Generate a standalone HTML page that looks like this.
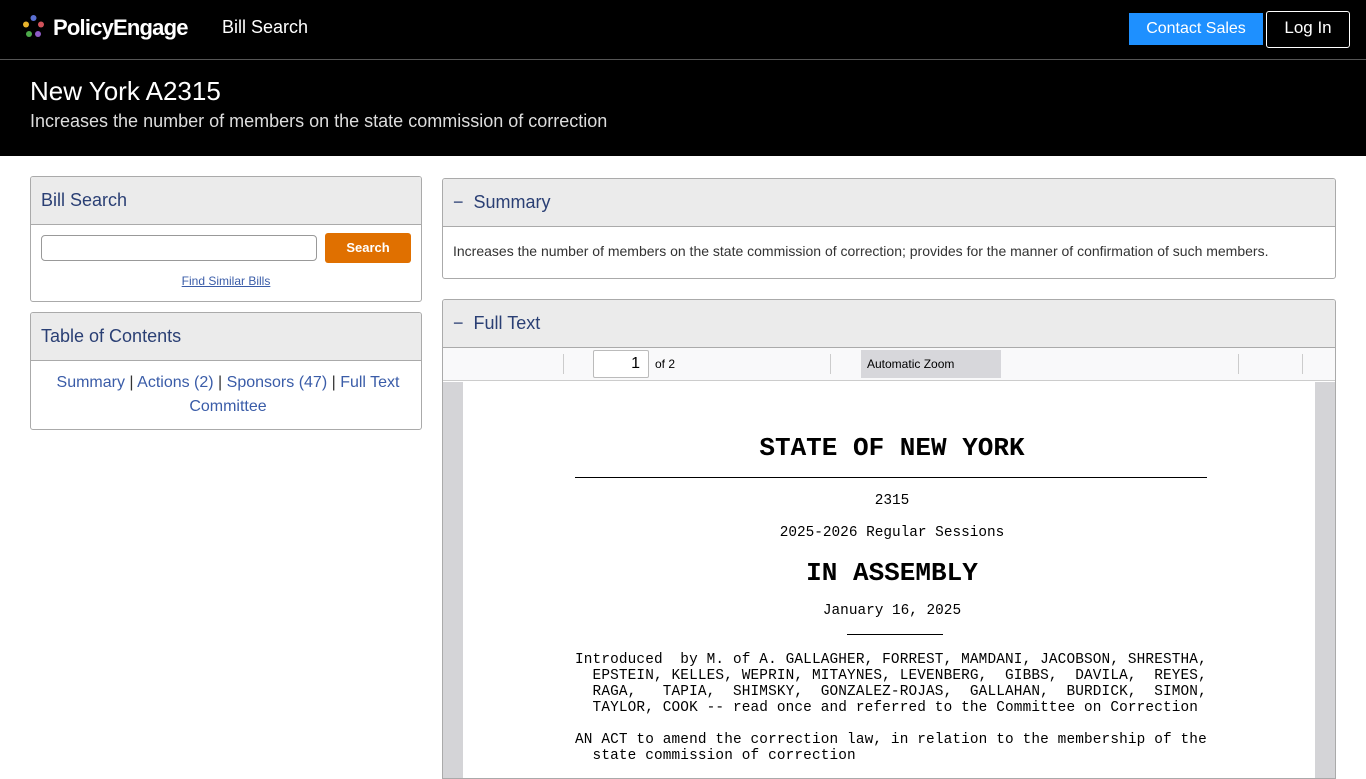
<!DOCTYPE html>
<html><head><meta charset="utf-8"><style>
*{box-sizing:border-box;margin:0;padding:0}
body{width:1366px;height:768px;overflow:hidden;background:#fff;font-family:"Liberation Sans",sans-serif;position:relative}
.abs{position:absolute}
.nav{left:0;top:0;width:1366px;height:60px;background:#000;border-bottom:1px solid #555}
.hero{left:0;top:60px;width:1366px;height:96px;background:#000;color:#fff}
.card{border:1px solid #aaa;border-radius:3px;background:#fff;overflow:hidden}
.ch{background:#ebebeb;border-bottom:1px solid #aaa;color:#2a3f74;font-size:18px;padding-left:10px}
.mono{font-family:"Liberation Mono",monospace;font-size:14.4px;line-height:16px;white-space:pre;color:#000}
a{color:#3a5ca8}
</style></head><body>
<div class="abs nav">
 <svg class="abs" style="left:20px;top:14px" width="28" height="28">
  <circle cx="13.5" cy="4" r="3" fill="#5a6fd1"/><circle cx="21" cy="10.5" r="3" fill="#d0525a"/>
  <circle cx="6" cy="10.5" r="3" fill="#e8b32c"/><circle cx="9" cy="20" r="3" fill="#4daa4a"/>
  <circle cx="18" cy="20" r="3" fill="#8e5cc5"/></svg>
 <div class="abs" style="left:53px;top:15px;color:#fff;font-size:22px;font-weight:bold;font-family:'Liberation Sans',sans-serif;letter-spacing:-0.8px">PolicyEngage</div>
 <div class="abs" style="left:222px;top:17px;color:#fff;font-size:18px">Bill Search</div>
 <div class="abs" style="left:1129px;top:13px;width:134px;height:32px;background:#1e90ff;color:#fff;font-size:16px;text-align:center;line-height:32px">Contact Sales</div>
 <div class="abs" style="left:1266px;top:11px;width:84px;height:37px;border:1px solid #fff;border-radius:3px;color:#fff;font-size:17px;text-align:center;line-height:31px">Log In</div>
</div>
<div class="abs hero">
 <div class="abs" style="left:30px;top:16px;font-size:26px">New York A2315</div>
 <div class="abs" style="left:30px;top:51px;font-size:18px;color:#ddd">Increases the number of members on the state commission of correction</div>
</div>

<div class="abs card" style="left:30px;top:176px;width:392px;height:126px">
 <div class="ch" style="height:48px;line-height:46px">Bill Search</div>
 <div class="abs" style="left:10px;top:58px;width:276px;height:26px;border:1px solid #999;border-radius:4px"></div>
 <div class="abs" style="left:294px;top:56px;width:86px;height:30px;background:#e07000;border-radius:3px;color:#fff;font-weight:bold;font-size:13px;text-align:center;line-height:30px">Search</div>
 <div class="abs" style="left:0;top:97px;width:390px;text-align:center;font-size:12px"><a style="text-decoration:underline">Find Similar Bills</a></div>
</div>

<div class="abs card" style="left:30px;top:312px;width:392px;height:118px">
 <div class="ch" style="height:48px;line-height:46px">Table of Contents</div>
 <div style="text-align:center;font-size:16px;line-height:24px;padding-top:10px;padding-left:4px;color:#333"><a>Summary</a> | <a>Actions (2)</a> | <a>Sponsors (47)</a> | <a>Full Text</a><br><a>Committee</a></div>
</div>

<div class="abs card" style="left:442px;top:178px;width:894px;height:101px">
 <div class="ch" style="height:48px;line-height:46px">−&nbsp;&nbsp;Summary</div>
 <div style="font-size:14px;color:#333;padding:16px 10px">Increases the number of members on the state commission of correction; provides for the manner of confirmation of such members.</div>
</div>

<div class="abs card" style="left:442px;top:299px;width:894px;height:480px;border-radius:3px 3px 0 0">
 <div class="ch" style="height:48px;line-height:46px">−&nbsp;&nbsp;Full Text</div>
 <div class="abs" style="left:0;top:48px;width:894px;height:33px;background:#f9f9fa;border-bottom:1px solid #ccc">
  <div class="abs" style="left:120px;top:6px;width:1px;height:20px;background:#ccc"></div>
  <div class="abs" style="left:150px;top:2px;width:56px;height:28px;border:1px solid #bbb;border-radius:2px;background:#fff;text-align:right;padding-right:8px;font-size:16px;line-height:26px">1</div>
  <div class="abs" style="left:212px;top:9px;font-size:12px">of 2</div>
  <div class="abs" style="left:387px;top:6px;width:1px;height:20px;background:#ccc"></div>
  <div class="abs" style="left:418px;top:2px;width:140px;height:28px;background:#d7d7db;font-size:12px;line-height:28px;padding-left:6px">Automatic Zoom</div>
  <div class="abs" style="left:795px;top:6px;width:1px;height:20px;background:#ccc"></div>
  <div class="abs" style="left:859px;top:6px;width:1px;height:20px;background:#ccc"></div>
 </div>
 <div class="abs" style="left:0;top:82px;width:894px;height:400px;background:#d4d4d7">
  <div class="abs" style="left:20px;top:0;width:852px;height:400px;background:#fff">
   <div class="abs" style="left:0;top:51px;width:858px;text-align:center;font-family:'Liberation Mono',monospace;font-weight:bold;font-size:26px;line-height:30px">STATE OF NEW YORK</div>
   <div class="abs" style="left:112px;top:95px;width:632px;height:1px;background:#000"></div>
   <div class="abs mono" style="left:0;top:111px;width:858px;text-align:center">2315</div>
   <div class="abs mono" style="left:0;top:143px;width:858px;text-align:center">2025-2026 Regular Sessions</div>
   <div class="abs" style="left:0;top:176px;width:858px;text-align:center;font-family:'Liberation Mono',monospace;font-weight:bold;font-size:26px;line-height:30px">IN ASSEMBLY</div>
   <div class="abs mono" style="left:0;top:221px;width:858px;text-align:center">January 16, 2025</div>
   <div class="abs" style="left:384px;top:252px;width:96px;height:1px;background:#000"></div>
   <div class="abs mono" style="left:112px;top:270px;letter-spacing:0.14px">Introduced  by M. of A. GALLAGHER, FORREST, MAMDANI, JACOBSON, SHRESTHA,
  EPSTEIN, KELLES, WEPRIN, MITAYNES, LEVENBERG,  GIBBS,  DAVILA,  REYES,
  RAGA,   TAPIA,  SHIMSKY,  GONZALEZ-ROJAS,  GALLAHAN,  BURDICK,  SIMON,
  TAYLOR, COOK -- read once and referred to the Committee on Correction

AN ACT to amend the correction law, in relation to the membership of the
  state commission of correction</div>
  </div>
 </div>
</div>
</body></html>
